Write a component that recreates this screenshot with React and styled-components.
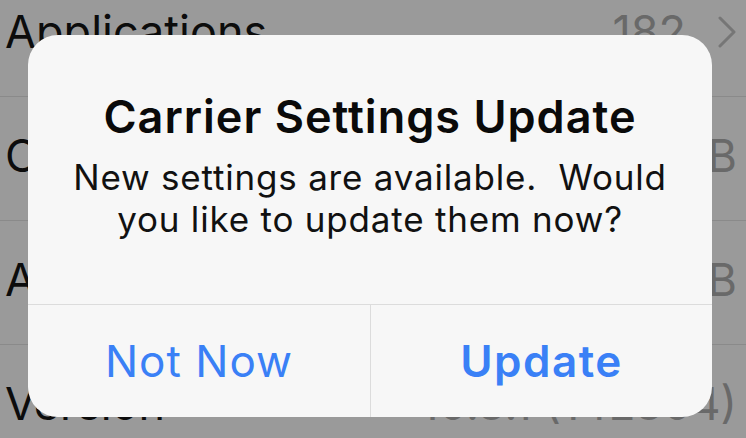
import React from 'react';
import styled, { createGlobalStyle } from 'styled-components';

const Global = createGlobalStyle`
  html, body {
    margin: 0;
    padding: 0;
    background: #9a9a9a;
  }
  body {
    width: 746px;
    height: 438px;
    overflow: hidden;
    font-family: Inter, "Liberation Sans", sans-serif;
  }
`;

const Screen = styled.div`
  position: relative;
  width: 746px;
  height: 438px;
  overflow: hidden;
  background: #9a9a9a;
`;

// settings list, scrolled so the first row is half hidden
const List = styled.div`
  display: flex;
  flex-direction: column;
  margin-top: -27px;
`;

const Row = styled.div`
  display: flex;
  align-items: center;
  justify-content: space-between;
  height: 123px;
  box-sizing: border-box;
  height: 124px;
  padding: 0 9px 6px 5px;
  border-bottom: 1px solid #8a8a8a;
  font-size: 45px;
`;

const Label = styled.span`
  color: #0c0c0c;
`;

const Value = styled.span`
  display: flex;
  align-items: center;
  gap: 31px;
  color: #696969;
`;

const Chevron = () => (
  <svg width="20" height="32" viewBox="0 0 20 32">
    <path d="M3 2 L17 16 L3 30" fill="none" stroke="#767676" strokeWidth="3" strokeLinecap="round" strokeLinejoin="round" />
  </svg>
);

const Alert = styled.div`
  position: absolute;
  left: 28px;
  top: 35px;
  width: 684px;
  height: 382px;
  border-radius: 30px;
  background: #f7f7f7;
  display: flex;
  flex-direction: column;
  overflow: hidden;
`;

const Body = styled.div`
  flex: 1;
  display: flex;
  flex-direction: column;
  align-items: center;
  padding-top: 56px;
  border-bottom: 1px solid #dcdcdc;
`;

const Title = styled.div`
  font-size: 45px;
  font-weight: 600;
  color: #0a0a0a;
  line-height: 52px;
  letter-spacing: 1px;
`;

const Message = styled.div`
  font-size: 35px;
  color: #111;
  line-height: 42px;
  text-align: center;
  letter-spacing: 0.8px;
  margin-top: 13px;
`;

const Buttons = styled.div`
  display: grid;
  grid-template-columns: 1fr 1fr;
  height: 112px;
`;

const Button = styled.div`
  display: flex;
  align-items: center;
  justify-content: center;
  color: #3a80f6;
  font-size: 44px;
  font-weight: ${p => (p.$primary ? 600 : 400)};
  letter-spacing: ${p => (p.$primary ? '1.5px' : '1px')};
  & + & {
    border-left: 1px solid #dcdcdc;
  }
`;

export default function App() {
  return (
    <Screen>
      <Global />
      <List>
        <Row>
          <Label>Applications</Label>
          <Value>182<Chevron /></Value>
        </Row>
        <Row>
          <Label>Capacity</Label>
          <Value>27.93 GB</Value>
        </Row>
        <Row>
          <Label>Available</Label>
          <Value>13.42 GB</Value>
        </Row>
        <Row>
          <Label>Version</Label>
          <Value>10.3.1 (14E304)</Value>
        </Row>
      </List>
      <Alert>
        <Body>
          <Title>Carrier Settings Update</Title>
          <Message>
            New settings are available.{'\u00a0'} Would
            <br />
            you like to update them now?
          </Message>
        </Body>
        <Buttons>
          <Button>Not Now</Button>
          <Button $primary>Update</Button>
        </Buttons>
      </Alert>
    </Screen>
  );
}
